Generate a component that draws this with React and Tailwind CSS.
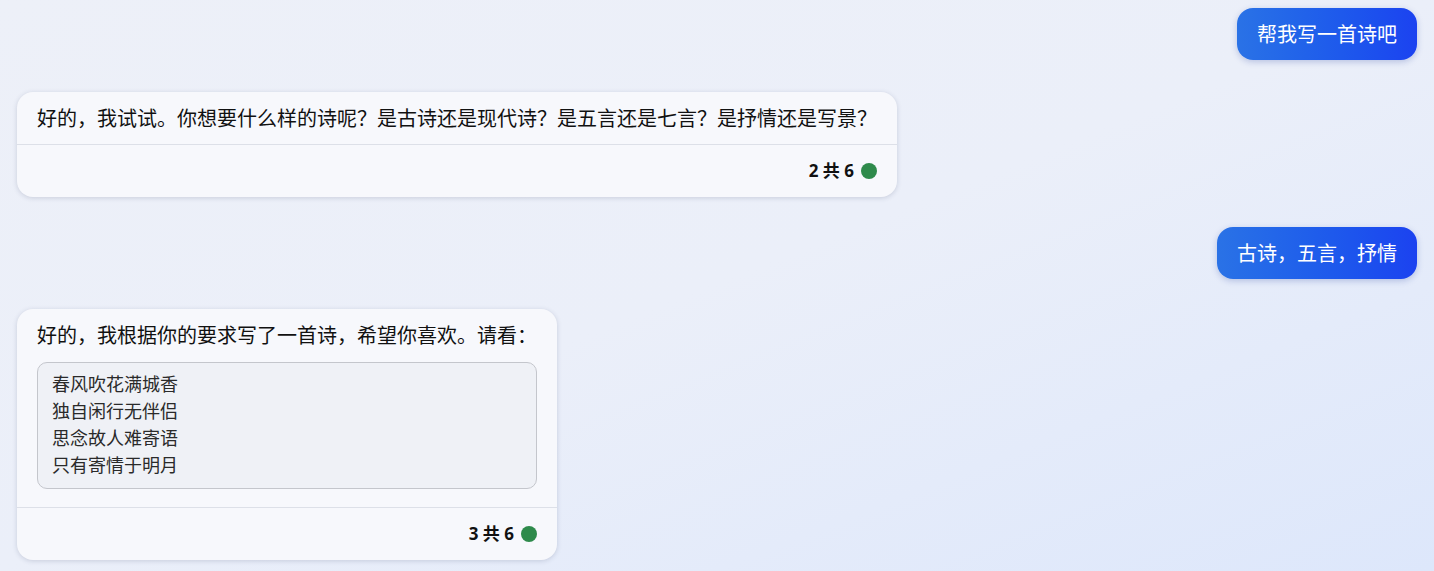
import React from "react";

const FONT = { fontFamily: '"Noto Sans CJK SC", "Noto Sans", sans-serif' };

function UserBubble({ text, className = "" }) {
  return (
    <div className={"flex justify-end " + className}>
      <div className="rounded-[16px] bg-gradient-to-r from-[#2a72e6] to-[#1c42f0] px-5 py-3 text-[20px] leading-7 text-white shadow-[0_2px_6px_rgba(30,60,160,0.25)] whitespace-nowrap">
        {text}
      </div>
    </div>
  );
}

function Footer({ n }) {
  return (
    <div className="flex items-center justify-end gap-[7px] border-t border-[#dde0e8] px-5 py-3 leading-7">
      <span className="text-[17px] font-bold text-[#111]" style={{ fontFamily: '"Noto Sans", "Noto Sans CJK SC", sans-serif' }}>
        {n} 共 6
      </span>
      <span className="h-4 w-4 rounded-full bg-[#2e8a4b]" />
    </div>
  );
}

export default function App() {
  return (
    <div
      className="flex h-[571px] w-full flex-col gap-[30px] overflow-hidden bg-gradient-to-br from-[#edf0f8] via-[#ebeff9] to-[#dde7fb] px-[17px] pt-2"
      style={FONT}
    >
      <UserBubble text="帮我写一首诗吧" className="mb-[2px]" />

      <div className="flex">
        <div className="w-[880px] rounded-[16px] bg-[#f7f8fc] shadow-[0_1px_5px_rgba(40,50,90,0.18)]">
          <div className="px-5 py-3 text-[20px] leading-7 text-[#111] whitespace-nowrap">
            好的，我试试。你想要什么样的诗呢？是古诗还是现代诗？是五言还是七言？是抒情还是写景？
          </div>
          <Footer n="2" />
        </div>
      </div>

      <UserBubble text="古诗，五言，抒情" />

      <div className="flex">
        <div className="w-[540px] rounded-[16px] bg-[#f7f8fc] shadow-[0_1px_5px_rgba(40,50,90,0.18)]">
          <div className="px-5 pt-3 pb-[18px]">
            <div className="text-[20px] leading-7 text-[#111] whitespace-nowrap">
              好的，我根据你的要求写了一首诗，希望你喜欢。请看：
            </div>
            <div className="mt-[13px] rounded-[10px] border border-[#c4c6cc] bg-[#eff1f6] pl-[14px] pt-[7px] pb-[10px] text-[18px] leading-[27px] text-[#2a2a2a]">
              <div>春风吹花满城香</div>
              <div>独自闲行无伴侣</div>
              <div>思念故人难寄语</div>
              <div>只有寄情于明月</div>
            </div>
          </div>
          <Footer n="3" />
        </div>
      </div>
    </div>
  );
}
